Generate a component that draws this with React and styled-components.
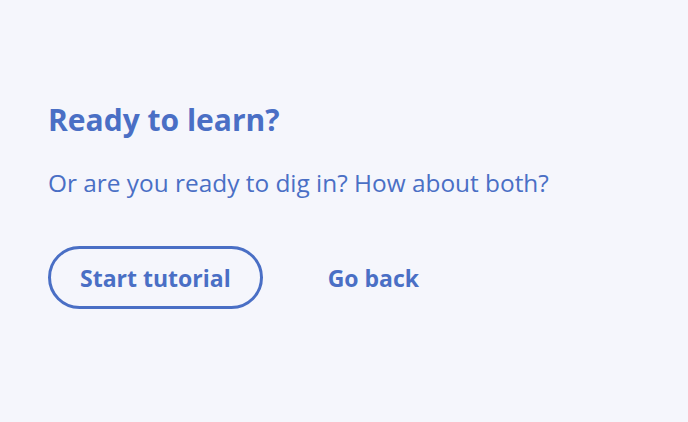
import styled, { createGlobalStyle } from "styled-components";

const GlobalStyle = createGlobalStyle`
  html, body {
    margin: 0;
    padding: 0;
    background: #f5f6fc;
  }
  body {
    font-family: "Open Sans", Lato, sans-serif;
  }
`;

const Page = styled.main`
  box-sizing: border-box;
  width: 688px;
  height: 422px;
  padding: 98px 48px 0;
  background: #f5f6fc;
  color: #4a6fc5;
`;

const Title = styled.h2`
  margin: 0;
  font-size: 30px;
  line-height: 44px;
  font-weight: 700;
`;

const Text = styled.p`
  margin: 25px 0 0;
  font-size: 24.4px;
  line-height: 32px;
  font-weight: 400;
`;

const Actions = styled.div`
  display: flex;
  align-items: center;
  gap: 33px;
  margin-top: 47px;
`;

const Button = styled.button`
  box-sizing: border-box;
  height: 63px;
  padding: 0 ${(p) => (p.$outline ? "29px" : "32px")};
  border: ${(p) => (p.$outline ? "3px solid #4a6fc5" : "none")};
  border-radius: 32px;
  background: transparent;
  color: #4a6fc5;
  font-family: "Open Sans", Lato, sans-serif;
  font-size: 23px;
  font-weight: 700;
  cursor: pointer;
`;

export default function App() {
  return (
    <>
      <GlobalStyle />
      <Page>
        <Title>Ready to learn?</Title>
        <Text>Or are you ready to dig in? How about both?</Text>
        <Actions>
          <Button $outline>Start tutorial</Button>
          <Button>Go back</Button>
        </Actions>
      </Page>
    </>
  );
}
